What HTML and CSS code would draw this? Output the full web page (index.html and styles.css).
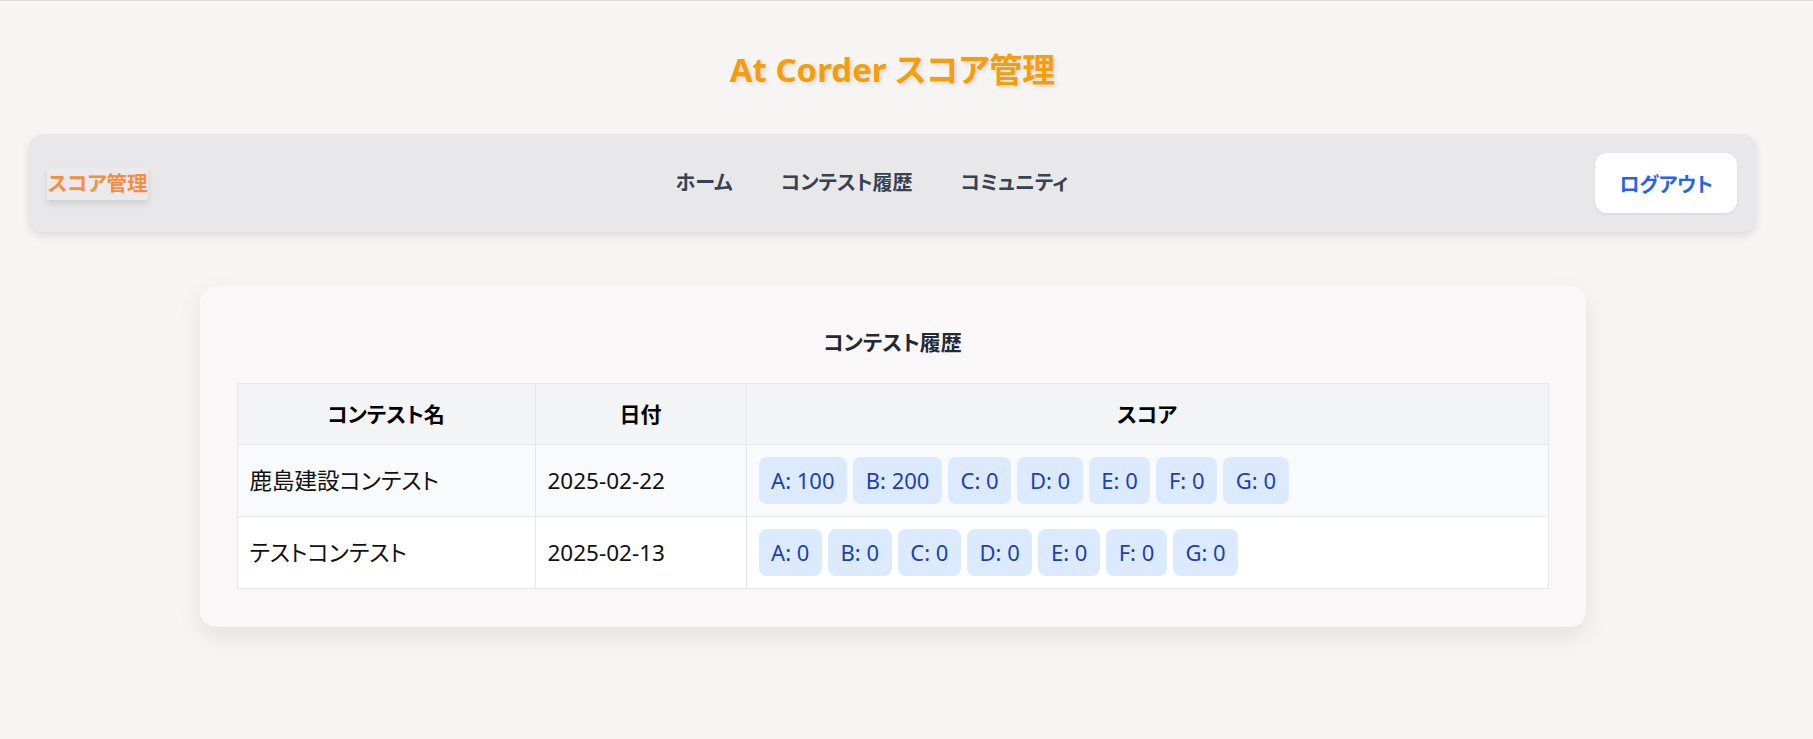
FILE: index.html
```html
<!DOCTYPE html>
<html lang="ja">
<head>
<meta charset="utf-8">
<title>At Corder スコア管理</title>
<link rel="stylesheet" href="styles.css">
</head>
<body>
<div class="page">
  <h1 class="site-title">At Corder スコア管理</h1>
  <nav class="navbar">
    <div class="brand">スコア管理</div>
    <ul class="nav-links">
      <li>ホーム</li>
      <li>コンテスト履歴</li>
      <li>コミュニティ</li>
    </ul>
    <button class="logout">ログアウト</button>
  </nav>
  <section class="card">
    <h2 class="card-title">コンテスト履歴</h2>
    <table class="history">
      <thead>
        <tr>
          <th class="col-name">コンテスト名</th>
          <th class="col-date">日付</th>
          <th class="col-score">スコア</th>
        </tr>
      </thead>
      <tbody>
        <tr class="row-alt">
          <td>鹿島建設コンテスト</td>
          <td>2025-02-22</td>
          <td>
            <div class="badges">
              <span class="badge">A: 100</span>
              <span class="badge">B: 200</span>
              <span class="badge">C: 0</span>
              <span class="badge">D: 0</span>
              <span class="badge">E: 0</span>
              <span class="badge">F: 0</span>
              <span class="badge">G: 0</span>
            </div>
          </td>
        </tr>
        <tr>
          <td>テストコンテスト</td>
          <td>2025-02-13</td>
          <td>
            <div class="badges">
              <span class="badge">A: 0</span>
              <span class="badge">B: 0</span>
              <span class="badge">C: 0</span>
              <span class="badge">D: 0</span>
              <span class="badge">E: 0</span>
              <span class="badge">F: 0</span>
              <span class="badge">G: 0</span>
            </div>
          </td>
        </tr>
      </tbody>
    </table>
  </section>
</div>
</body>
</html>
```

FILE: styles.css
```css
* {
  box-sizing: border-box;
}

html, body {
  margin: 0;
  padding: 0;
}

body {
  background: #f6f5f3;
  border-top: 1px solid #dedede;
  font-family: "Noto Sans", "Noto Sans CJK JP", sans-serif;
  font-feature-settings: "palt";
  color: #111;
  min-height: 738px;
}

.page {
  padding: 0 57px 0 29px;
}

.site-title {
  margin: 48px 0 0;
  text-align: center;
  font-size: 33px;
  line-height: 42px;
  font-weight: 700;
  color: #f59e0b;
  text-shadow: 2px 2px 4px rgba(0, 0, 0, 0.12);
}

.navbar {
  margin-top: 43px;
  display: flex;
  align-items: center;
  justify-content: space-between;
  height: 98px;
  padding: 0 19px 0 18px;
  background: #e8e8eb;
  border-radius: 14px;
  box-shadow: 0 4px 8px rgba(0, 0, 0, 0.1);
}

.brand {
  height: 33px;
  padding: 0 1px;
  font-size: 20.5px;
  line-height: 33px;
  font-weight: 700;
  color: #fb8a3c;
  background: #eaeaec;
  box-shadow: 0 4px 6px rgba(0, 0, 0, 0.1);
}

.nav-links {
  display: flex;
  gap: 48px;
  margin: 0;
  padding: 0;
  list-style: none;
}

.nav-links li {
  font-size: 20px;
  line-height: 30px;
  font-weight: 700;
  color: #374151;
}

.logout {
  height: 60px;
  padding: 0 24px;
  border: none;
  border-radius: 12px;
  background: #fff;
  color: #2563eb;
  font-family: inherit;
  font-feature-settings: "palt";
  font-size: 20px;
  font-weight: 700;
  box-shadow: 0 1px 3px rgba(0, 0, 0, 0.08);
}

.card {
  max-width: 1386px;
  margin: 54px auto 0;
  padding: 37px 37px 38px;
  background: #f9f7f8;
  border-radius: 16px;
  box-shadow: 0 10px 25px rgba(0, 0, 0, 0.08);
}

.card-title {
  margin: 0 0 22px;
  text-align: center;
  font-size: 21px;
  line-height: 38px;
  font-weight: 700;
  color: #1f2937;
}

.history {
  width: 100%;
  border-collapse: collapse;
  font-size: 22.5px;
}

.history th,
.history td {
  border: 1px solid #e5e7eb;
  padding: 12px;
  text-align: left;
}

.history th {
  background: #f3f4f6;
  text-align: center;
  font-size: 21px;
  font-weight: 700;
  line-height: 36px;
  color: #000;
}

.history td {
  line-height: 33px;
  color: #111;
}

.col-name {
  width: 298px;
}

.col-date {
  width: 211px;
}

.row-alt td {
  background: #f9fafb;
}

.history tbody tr:not(.row-alt) td {
  background: #fff;
}

.badges {
  display: flex;
  flex-wrap: wrap;
  gap: 6px;
}

.badge {
  display: inline-block;
  padding: 7px 12.6px;
  border-radius: 8px;
  background: #dbeafe;
  color: #1e40af;
  font-size: 22px;
  line-height: 33px;
}
```
